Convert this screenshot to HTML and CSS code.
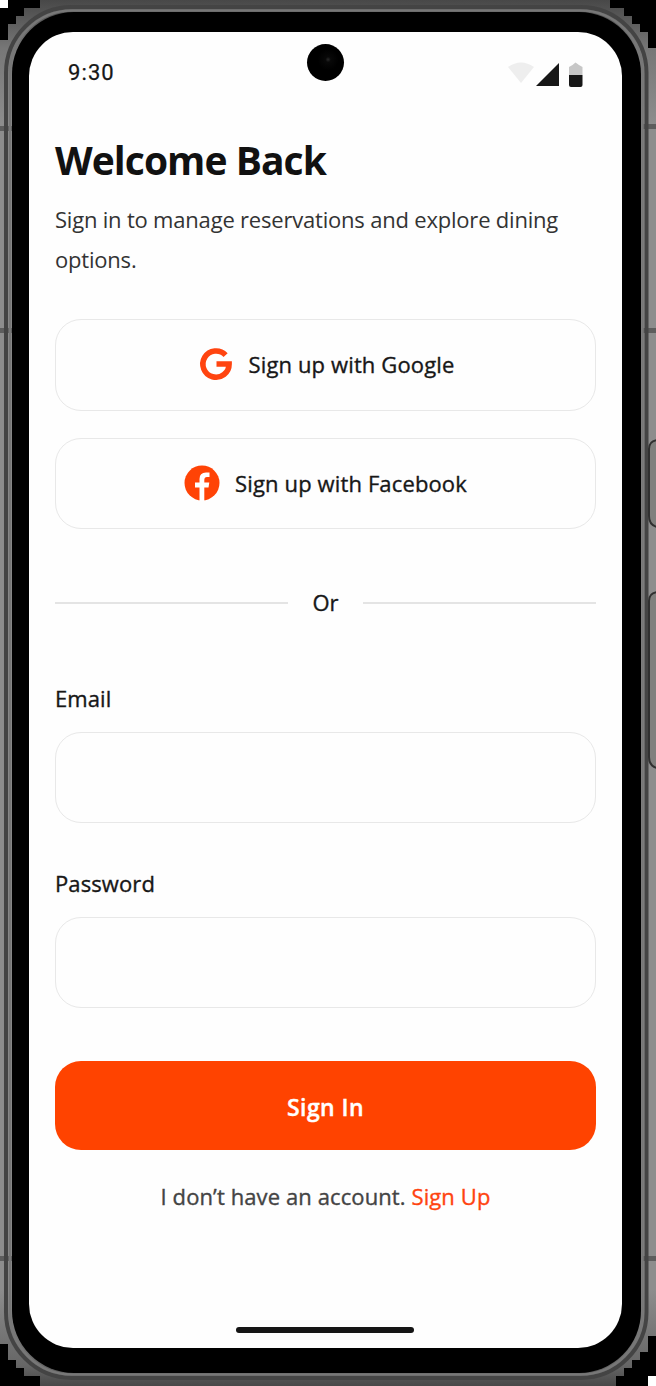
FILE: index.html
```html
<!DOCTYPE html>
<html lang="en">
<head>
<meta charset="utf-8">
<title>Welcome Back</title>
<link rel="stylesheet" href="styles.css">
</head>
<body>
<div class="device">
  <svg class="casing" viewBox="0 0 656 1386" aria-hidden="true">
    <defs>
      <linearGradient id="metal" x1="0" y1="0" x2="0" y2="1">
        <stop offset="0" stop-color="#484848"/><stop offset=".035" stop-color="#777"/><stop offset=".09" stop-color="#8d8d8d"/><stop offset=".93" stop-color="#8d8d8d"/><stop offset=".985" stop-color="#666"/><stop offset="1" stop-color="#484848"/>
      </linearGradient>
    </defs>
    <rect width="656" height="1386" fill="url(#metal)"/>
    <path d="M0 0H40V8H24V16H16V24H8V40H0Z"/>
    <path d="M0 0H8V8H0Z" fill="#fff"/>
    <path d="M610 0H656V48H648V32H640V24H632V16H624V8H610Z"/>
    <path d="M0 1344H8V1360H16V1368H24V1376H40V1386H0Z"/>
    <path d="M656 1336H648V1352H640V1360H632V1368H624V1376H616V1386H656Z"/>
    <path d="M648 1376H656V1386H648Z" fill="#fff"/>
    <g fill="#444" opacity=".65"><path d="M0 126H12V131H0ZM642 124H656V129H642ZM0 328H12V333H0ZM642 328H656V333H642ZM0 1256H12V1261H0ZM642 1256H656V1261H642Z"/></g>
    <rect x="6" y="7" width="640.5" height="1371" rx="66" fill="none" stroke="#444" stroke-width="4"/>
    <rect x="10" y="10.5" width="632.5" height="1364" rx="62" fill="none" stroke="#777" stroke-width="2.5"/>
    <g fill="#80807e" stroke="#303030" stroke-width="2"><path d="M657 440Q649 441 649 449V516Q649 525 657 527"/><path d="M657 592Q649 593 649 601V757Q649 766 657 768"/></g>
  </svg>
  <div class="bezel">
    <main class="screen">
      <header class="status">
        <span class="clock">9:30</span>
        <svg class="signals" viewBox="0 0 76 28" aria-hidden="true">
          <path d="M0 6Q13-3 26 6L13 22Z" fill="#eee"/>
          <path d="M51 2V25H28Z" fill="#171717"/>
          <path d="M61 6L64.500 4L67.500 1.500L71 4L74.500 6V14H61Z" fill="#c7c7c7"/>
          <path d="M61 14H74.500V24Q74.500 26 72.500 26H63Q61 26 61 24Z" fill="#171717"/>
        </svg>
      </header>
      <span class="camera"></span>
      <h1 class="title">Welcome Back</h1>
      <p class="intro">Sign in to manage reservations and explore dining<br>options.</p>
      <div class="providers">
        <button class="provider provider-google">
          <svg class="google" viewBox="0 0 32 32" aria-hidden="true"><path d="M25.600 7.200A13.100 13.100 0 1 0 29.100 16H16.500" fill="none" stroke="#ff4410" stroke-width="5.600"/></svg>
          <span>Sign up with Google</span>
        </button>
        <button class="provider">
          <svg class="facebook" viewBox="0 0 36 36" aria-hidden="true"><circle cx="18" cy="18" r="17.500" fill="#ff4306"/><path d="M15.500 36V22.500H11V17.500H15.500V14Q15.500 7.500 22 7.500H25.500V12H23Q20.300 12 20.300 15V17.500H25.300L24.500 22.500H20.300V36Z" fill="#fff"/></svg>
          <span>Sign up with Facebook</span>
        </button>
      </div>
      <div class="divider"><span class="or">Or</span></div>
      <form class="form">
        <label class="label" for="email">Email</label>
        <input class="field" id="email" type="email">
        <label class="label" for="password">Password</label>
        <input class="field" id="password" type="password">
        <button class="submit" type="button">Sign In</button>
      </form>
      <p class="account">I don’t have an account. <a class="link">Sign Up</a></p>
      <div class="home"></div>
    </main>
  </div>
</div>
</body>
</html>
```
FILE: styles.css
```css
* { box-sizing: border-box; }
body { margin: 0; background: #000; font-family: "Open Sans", sans-serif; color: #171717; }
.device { position: relative; width: 656px; height: 1386px; padding: 12px 15px 13px 12px; overflow: hidden; }
.casing { position: absolute; inset: 0; width: 656px; height: 1386px; }
.bezel { position: relative; height: 1361px; padding: 20px 19px 25px 17px; background: #000; border-radius: 62px; }
.screen { position: relative; display: flex; flex-direction: column; height: 1316px; padding: 0 26px; background: #fefefe; border-radius: 44px; }
.status { display: flex; justify-content: space-between; height: 104px; padding: 27px 12px 0 13px; }
.clock { font: 400 22px/27px Roboto, sans-serif; letter-spacing: 1.1px; -webkit-text-stroke: .25px #171717; }
.signals { width: 76px; height: 28px; margin-top: 2px; }
.camera { position: absolute; left: 278px; top: 12px; width: 37px; height: 37px; border-radius: 50%; background: radial-gradient(circle at 57% 42%, #292929 0, #080808 9%, #000 35%); }
.title { margin: 0; color: #111; font-size: 39px; font-weight: 700; line-height: 48px; white-space: nowrap; letter-spacing: -.95px; }
.intro { margin: 16px 0 39px; color: #333; font-size: 22px; font-weight: 400; line-height: 39.500px; white-space: nowrap; letter-spacing: -.2px; }
.providers { display: flex; flex-direction: column; gap: 27px; margin-top: 1px; }
.provider { display: flex; align-items: center; justify-content: center; height: 91.500px; padding: 0; border: 1.500px solid #e8e8e8; border-radius: 26px; background: #fefefe; color: #171717; font: 400 22px/32px "Open Sans", sans-serif; white-space: nowrap; letter-spacing: .13px; -webkit-text-stroke: .35px #171717; }
.provider-google { padding: 0 0 1px 3px; }
.google { width: 32px; height: 32px; margin-right: 17px; overflow: visible; }
.facebook { width: 36px; height: 36px; margin-right: 15px; }
.divider { display: flex; align-items: center; gap: 24px; height: 40px; margin-top: 54px; font-size: 22px; -webkit-text-stroke: .35px #171717; }
.or { margin-top: -3px; }
.divider::before, .divider::after { content: ""; flex: 1; height: 1.500px; background: #e4e4e4; }
.form { display: flex; flex-direction: column; margin-top: 60px; }
.label { height: 30px; margin-bottom: 19px; font-size: 22px; line-height: 30px; letter-spacing: .1px; -webkit-text-stroke: .35px #171717; }
.field { width: 100%; height: 91px; margin: 0 0 45px; padding: 0 24px; border: 1.500px solid #e8e8e8; border-radius: 26px; background: #fefefe; font: 22px "Open Sans", sans-serif; }
.submit { height: 89px; margin-top: 8px; padding: 2px 0 0; border: 0; border-radius: 26px; background: #ff4300; color: #fff; font: 600 23px/32px "Open Sans", sans-serif; letter-spacing: .4px; -webkit-text-stroke: .4px #fff; }
.account { margin: 30px 0 0; text-align: center; color: #444; font-size: 22px; line-height: 32px; white-space: nowrap; letter-spacing: .1px; -webkit-text-stroke: .35px #444; }
.link { color: #ff4310; -webkit-text-stroke-color: #ff4310; }
.home { align-self: center; width: 178px; height: 6px; margin: auto 1px 15px 0; border-radius: 3px; background: #151515; }
```
